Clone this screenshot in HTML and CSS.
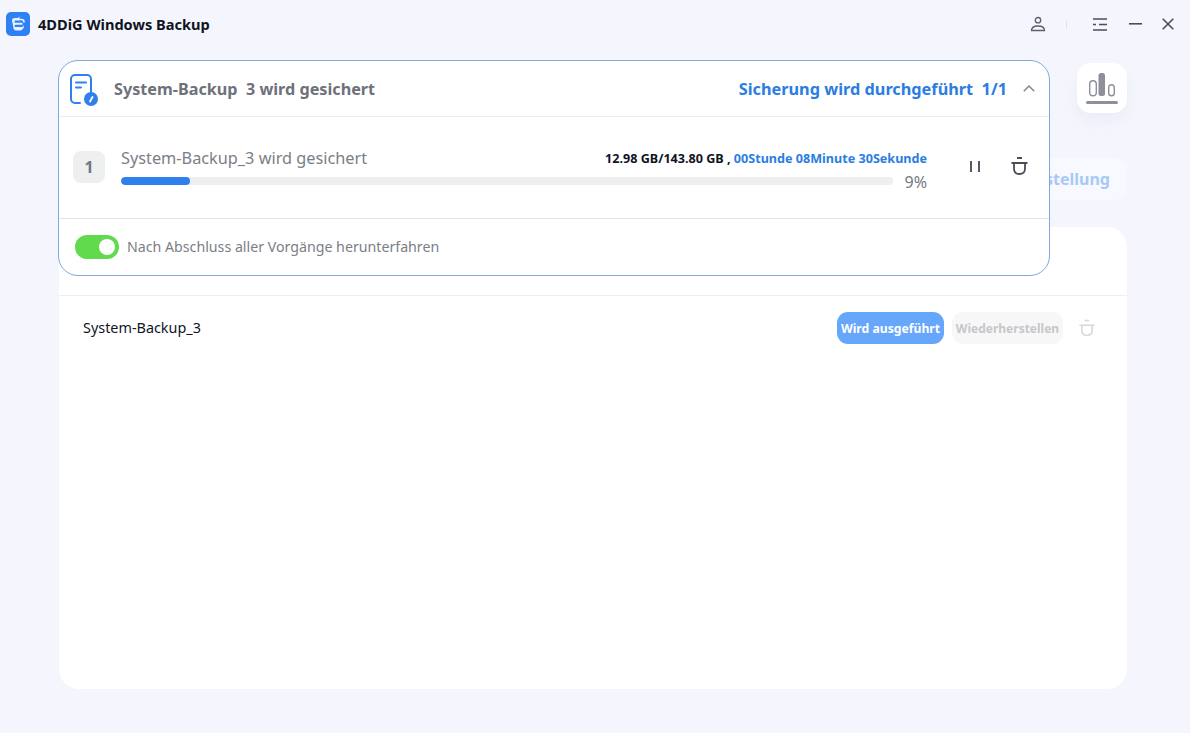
FILE: index.html
```html
<!DOCTYPE html>
<html lang="de">
<head>
<meta charset="utf-8">
<title>4DDiG Windows Backup</title>
<link rel="stylesheet" href="styles.css">
</head>
<body>
<div class="app">
  <header class="titlebar">
    <div class="brand">
      <svg class="logo" width="24" height="24" viewBox="0 0 24 24"><rect width="24" height="24" rx="5" fill="#2f80f2"/><path d="M6 8.500c0-1.500 1-2.500 2.500-2.500h3.500l1.500-1.500v4h-3.500c-1 0-1.500.5-1.500 1.200 0 .6.500 1 1.500 1h6.500v2h-6.500c-1 0-1.500.5-1.500 1.100 0 .8.600 1.200 1.500 1.200h5c1.500 0 2.500-.6 3-2 .3 3-1.500 5.500-4.500 5.500h-3.500c-1.500 0-2.500-1-2.500-2.500z" fill="#e6f1ff"/><path d="M13 7.500h2.500c1.500 0 2.500 1 2.500 2.500" fill="none" stroke="#e6f1ff" stroke-width="1.600" stroke-linecap="round"/></svg>
      <span class="brand-name">4DDiG Windows Backup</span>
    </div>
    <div class="win-controls">
      <svg class="ic-user" width="16" height="16" viewBox="0 0 16 16" fill="none" stroke="#5b5f6b" stroke-width="1.300"><circle cx="8" cy="4.200" r="2.700"/><path d="M1.500 14.500c0-3 2.500-4.500 6.500-4.500s6.500 1.500 6.500 4.500z"/></svg>
      <span class="sep"></span>
      <svg class="ic-menu" width="14" height="13" viewBox="0 0 14 13" fill="none" stroke="#4a4e5a" stroke-width="1.500"><path d="M0 1h14M0 6.500h3M6 6.500h8M0 12h14"/></svg>
      <svg class="ic-min" width="13" height="2" viewBox="0 0 13 2"><rect width="13" height="1.600" fill="#4a4e5a"/></svg>
      <svg class="ic-close" width="12" height="12" viewBox="0 0 12 12" fill="none" stroke="#4a4e5a" stroke-width="1.600"><path d="M.7.700l10.600 10.600M11.300.700L.7 11.300"/></svg>
    </div>
  </header>

  <main class="content">
    <div class="tabs">
      <button class="tab">Wiederherstellung</button>
    </div>
    <section class="list-card">
      <div class="list-head"></div>
      <div class="list-row">
        <span class="row-name">System-Backup_3</span>
        <div class="row-actions">
          <span class="btn btn-run">Wird ausgeführt</span>
          <span class="btn btn-off">Wiederherstellen</span>
          <svg class="trash-off" width="16" height="18" viewBox="0 0 17 18" fill="none" stroke="#d6d8dc" stroke-width="1.700"><path d="M6 1h5M.5 6h16M3 6v5.500c0 3.200 2 5.500 5.500 5.500s5.500-2.300 5.500-5.500V6"/></svg>
        </div>
      </div>
    </section>
  </main>

  <button class="float-btn" aria-label="Statistik">
    <svg width="32" height="31" viewBox="0 0 32 31" fill="none"><rect x="3.700" y="7.700" width="6.600" height="15" rx="3.300" stroke="#8d8f9a" stroke-width="1.400"/><rect x="12.500" y="0" width="6.500" height="23" rx="2.500" fill="#8d8f9a"/><rect x="22.700" y="11.700" width="5.600" height="11" rx="2.800" stroke="#8d8f9a" stroke-width="1.400"/><rect y="28" width="32" height="3" rx="1.500" fill="#8d8f9a"/></svg>
  </button>

  <section class="panel">
    <div class="panel-head">
      <div class="panel-title">
        <svg class="doc" width="30" height="32" viewBox="0 0 30 32" fill="none"><path d="M11 29H6a4 4 0 0 1-4-4V5a4 4 0 0 1 4-4h12a4 4 0 0 1 4 4v13" stroke="#2f80ed" stroke-width="2" stroke-linecap="round"/><path d="M7 8.500h10M7 13.500h5" stroke="#2f80ed" stroke-width="2" stroke-linecap="round"/><circle cx="22" cy="25" r="7" fill="#2f80ed"/><path d="M21 27.500l2.500-4.500" stroke="#fff" stroke-width="1.800" stroke-linecap="round"/></svg>
        <span class="title-text">System-Backup&nbsp; 3 wird gesichert</span>
      </div>
      <div class="panel-status">
        <span class="status-text">Sicherung wird durchgeführt&nbsp; 1/1</span>
        <svg width="12" height="7" viewBox="0 0 12 7" fill="none" stroke="#7d818b" stroke-width="1.400"><path d="M.8 6.200L6 1l5.200 5.200"/></svg>
      </div>
    </div>
    <div class="job">
      <span class="job-num">1</span>
      <div class="job-main">
        <div class="job-top">
          <span class="job-name">System-Backup_3 wird gesichert</span>
          <span class="job-meta"><span class="job-size">12.98 GB/143.80 GB , </span><span class="job-time">00Stunde 08Minute 30Sekunde</span></span>
        </div>
        <div class="job-bottom">
          <div class="track"><div class="fill" style="width:9%"></div></div>
          <span class="pct">9%</span>
        </div>
      </div>
      <div class="job-actions">
        <svg width="10" height="11" viewBox="0 0 10 11" fill="#555965"><rect width="2" height="11"/><rect x="8" width="2" height="11"/></svg>
        <svg width="17" height="18" viewBox="0 0 17 18" fill="none" stroke="#4a4e5a" stroke-width="1.800"><path d="M6 1h5M.5 6h16M3 6v5.500c0 3.200 2 5.500 5.500 5.500s5.500-2.300 5.500-5.500V6"/></svg>
      </div>
    </div>
    <div class="panel-foot">
      <span class="toggle"><span class="knob"></span></span>
      <span class="foot-text">Nach Abschluss aller Vorgänge herunterfahren</span>
    </div>
  </section>
</div>
</body>
</html>
```
FILE: styles.css
```css
* { box-sizing: border-box; }
html, body { margin: 0; height: 100%; }
body {
  background: #f5f6fd;
  font-family: "Noto Sans", "Noto Sans CJK SC", sans-serif;
  overflow: hidden;
}
.app { position: relative; width: 1190px; height: 733px; }

.titlebar {
  height: 48px;
  display: flex;
  align-items: center;
  justify-content: space-between;
  padding: 0 16px 0 6px;
}
.brand { display: flex; align-items: center; gap: 8px; }
.brand-name { font-size: 14.600px; font-weight: 700; color: #10141f; }
.win-controls { display: flex; align-items: center; }
.sep { width: 1px; height: 9px; background: #e3e4e8; margin: 0 26px 0 20px; }
.ic-min { margin: 0 20px 0 22px; }

.content { padding: 110px 63px 0 59px; }
.tabs { display: flex; justify-content: flex-end; height: 42px; }
.tab {
  width: 220px;
  height: 42px;
  border: 0;
  border-radius: 12px;
  padding: 0 17px 0 0;
  background: #f8f9fe;
  color: #a8c9f7;
  font: 700 16px "Noto Sans", sans-serif;
  text-align: right;
}
.list-card {
  margin-top: 27px;
  height: 462px;
  background: #fff;
  border-radius: 20px;
}
.list-head { height: 69px; border-bottom: 1px solid #eceef1; }
.list-row {
  height: 64px;
  display: flex;
  align-items: center;
  justify-content: space-between;
  padding: 0 32px 0 24px;
}
.row-name { font-size: 14.400px; color: #10141f; padding-bottom: 2px; }
.row-actions { display: flex; align-items: center; }
.btn {
  height: 32px;
  border-radius: 11px;
  display: flex;
  align-items: center;
  justify-content: center;
  font-size: 12.200px;
  font-weight: 700;
}
.btn-run { width: 107px; background: #66a6fb; color: #fff; }
.btn-off { width: 111px; margin-left: 8px; background: #f7f7f8; color: #c5c7cb; font-size: 12px; }
.trash-off { margin-left: 16px; }

.float-btn {
  position: absolute;
  left: 1077px;
  top: 63px;
  width: 50px;
  height: 50px;
  border: 0;
  border-radius: 14px;
  background: #fff;
  box-shadow: 0 8px 16px rgba(90, 110, 170, .07);
  display: flex;
  align-items: center;
  justify-content: center;
  padding: 0;
}

.panel {
  position: absolute;
  left: 58px;
  top: 60px;
  width: 992px;
  height: 216px;
  background: #fff;
  border: 1px solid #7fa8de;
  border-radius: 20px;
  display: flex;
  flex-direction: column;
}
.panel-head {
  height: 56px;
  flex: none;
  display: flex;
  align-items: center;
  justify-content: space-between;
  padding: 0 14px 0 10px;
  border-bottom: 1px solid #eceef1;
}
.panel-title { display: flex; align-items: center; gap: 15px; }
.doc { margin-top: 2px; }
.title-text { font-size: 16.200px; font-weight: 700; color: #6e717a; }
.panel-status { display: flex; align-items: center; gap: 16px; }
.status-text { font-size: 16.300px; font-weight: 700; color: #2a7de1; }

.job {
  height: 102px;
  flex: none;
  display: flex;
  align-items: flex-start;
  padding: 29px 20px 0 14px;
  border-bottom: 1px solid #e4e5e8;
}
.job-num {
  width: 32px;
  height: 32px;
  margin-top: 5px;
  border-radius: 8px;
  background: #eeeff1;
  color: #74777f;
  font-size: 16px;
  font-weight: 700;
  display: flex;
  align-items: center;
  justify-content: center;
  flex: none;
}
.job-main { width: 806px; margin-left: 16px; }
.job-top {
  display: flex;
  align-items: center;
  justify-content: space-between;
  height: 24px;
}
.job-name { font-size: 16.300px; color: #7b7e86; }
.job-meta { font-size: 12.600px; font-weight: 700; }
.job-size { color: #10141f; }
.job-time { color: #2a7de1; }
.job-bottom { display: flex; align-items: center; justify-content: space-between; margin-top: 3px; height: 16px; }
.track { width: 772px; height: 8px; border-radius: 4px; background: #eeeff1; overflow: hidden; }
.fill { height: 100%; border-radius: 4px; background: #2f80ed; }
.pct { font-size: 16px; color: #74777f; position: relative; top: 1px; }
.job-actions {
  display: flex;
  align-items: center;
  gap: 31px;
  margin: 11px 0 0 43px;
}

.panel-foot {
  flex: 1;
  display: flex;
  align-items: center;
  gap: 8px;
  padding: 0 0 0 16px;
}
.toggle {
  width: 44px;
  height: 24px;
  border-radius: 12px;
  background: #62da4e;
  display: flex;
  align-items: center;
  justify-content: flex-end;
  padding-right: 4px;
}
.knob { width: 16px; height: 16px; border-radius: 50%; background: #fff; }
.foot-text { font-size: 14.200px; color: #7b7e86; padding-bottom: 2px; }
```
